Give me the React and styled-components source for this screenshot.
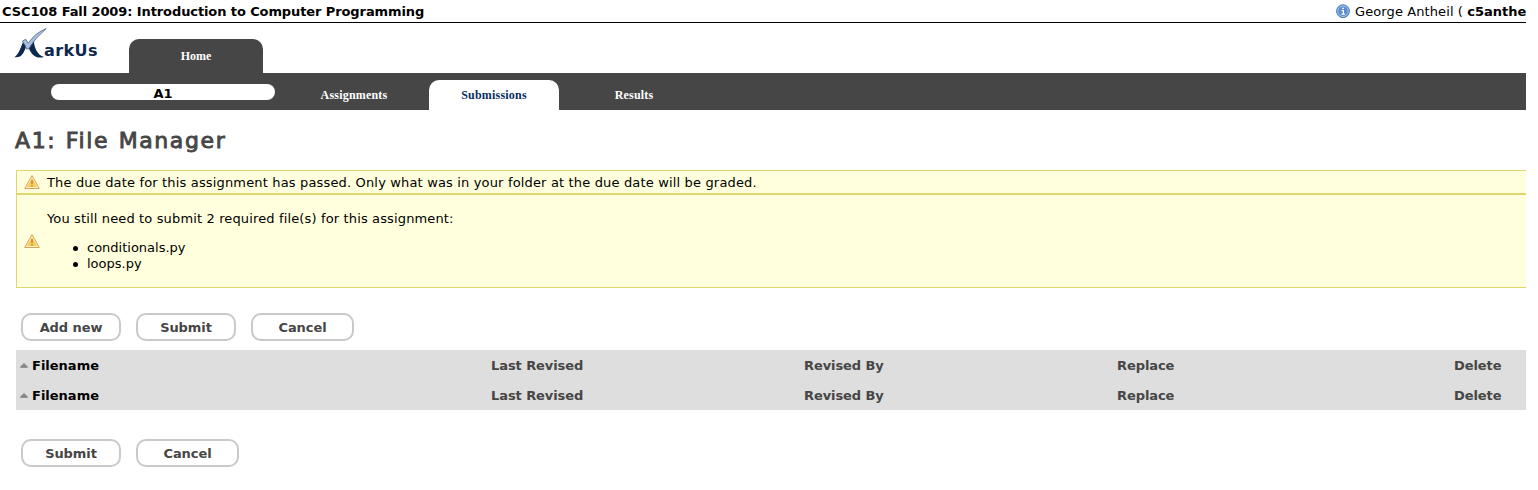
import React from 'react';
import styled, { createGlobalStyle } from 'styled-components';

const Global = createGlobalStyle`
  body { margin: 0; background: #fff; color: #000; font: 13px/16px Verdana, "DejaVu Sans", sans-serif; overflow: hidden; }
  * { box-sizing: border-box; }
`;
const Page = styled.div`width: 1526px; height: 490px; overflow: hidden;`;
const Text = styled.span`
  white-space: pre;
  letter-spacing: ${(p) => p.$ls || 0}px;
  font-weight: ${(p) => (p.$bold ? 700 : 400)};
`;
const TopBar = styled.header`
  height: 23px; padding: 4px 0 0 2px; border-bottom: 1px solid #000;
  display: flex; justify-content: space-between;
`;
const User = styled.div`
  display: flex; width: 190px; overflow: hidden; white-space: pre;
  svg { flex: none; margin-right: 5px; }
`;
const Brand = styled.div`
  height: 50px; display: flex; align-items: flex-end; padding-left: 14px;
`;
const LogoBox = styled.div`
  width: 115px; height: 50px; padding-top: 4px; display: flex; align-items: flex-start;
`;
const LogoText = styled.span`
  font: 700 16px/20px "DejaVu Sans", sans-serif; color: #0d274d; margin: 14px 0 0 -3px;
  letter-spacing: 0.4px;
`;
const HomeTab = styled.a`
  width: 134px; height: 34px; border-radius: 10px 10px 0 0; background: #464646; color: #fff;
  font: 700 12px/34px "Liberation Serif", serif; text-align: center;
`;
const Nav = styled.nav`
  height: 37px; background: #464646; display: flex; align-items: flex-end; padding-left: 51px;
`;
const Pill = styled.div`
  width: 224px; height: 16px; margin: 0 14px 10px 0; border-radius: 8px; background: #fff;
  text-align: center; font-weight: 700; line-height: 19px;
`;
const Tab = styled.a`
  width: 130px; height: 30px; margin-right: 10px; border-radius: 10px 10px 0 0; text-align: center;
  font: 700 12px/30px "Liberation Serif", serif; letter-spacing: 0.2px;
  color: ${(p) => (p.$active ? '#0a2f5f' : '#fff')};
  background: ${(p) => (p.$active ? '#fff' : 'transparent')};
`;
const Title = styled.h1`
  margin: 0; height: 60px; padding: 16px 0 0 15px; color: #464646;
  font: 400 22px/30px "DejaVu Sans", sans-serif; letter-spacing: 1.6px; word-spacing: 1px;
  -webkit-text-stroke: 0.9px #464646;
`;
const Main = styled.main`padding-left: 16px;`;
const Notice = styled.section`
  height: ${(p) => p.$h}px; background: #ffffdd; border: 1px solid #dfd66d; border-right: 0;
  display: flex; align-items: center; padding-left: 7px;
  svg { flex: none; margin-right: 7px; }
`;
const NoticeLine = styled(Text)`padding-top: 1px;`;
const Files = styled.ul`
  margin: 13px 0 0; padding: 0 0 0 40px; list-style: none;
  li { display: flex; align-items: center; margin-left: -14px; }
  li::before { content: ''; width: 5px; height: 5px; border-radius: 50%; background: #000; margin: 1px 9px 0 0; }
`;
const Buttons = styled.div`
  display: flex; gap: 15px; padding: ${(p) => p.$top}px 0 9px 5px;
`;
const Button = styled.button`
  width: ${(p) => p.$w}px; height: 28px; padding: 2px 0 0; border: 2px solid #c9c9c9; border-radius: 10px;
  background: #fff; color: #464646; font: 700 13px/16px "DejaVu Sans", sans-serif; letter-spacing: -0.08px;
`;
const Row = styled.div`
  height: 30px; padding-top: 2px; background: #dedede; color: #464646; font-weight: 700; letter-spacing: -0.08px;
  display: grid; grid-template-columns: 475px 313px 313px 337px 1fr; align-items: center;
`;
const First = styled.div`
  display: flex; align-items: center; color: #000; padding-left: 4px; letter-spacing: 0;
  svg { margin: 0 4px 1px 0; }
`;

const Info = () => (
  <svg width="14" height="16" viewBox="0 0 14 16">
    <circle cx="7" cy="7.2" r="6.4" fill="#5b8fcb" stroke="#4b79b3" />
    <circle cx="7" cy="7.2" r="5.3" fill="none" stroke="#a9c8ea" />
    <path d="M6.2 4.4h1.7M5.5 6.6H7.4V10M5.5 10.2h3.4" stroke="#fff" strokeWidth="1.2" fill="none" />
  </svg>
);
const Warning = () => (
  <svg width="16" height="16" viewBox="0 0 16 16">
    <path d="M8 1.5L15.3 14.5H.7Z" fill="#fff2c8" stroke="#d8a35c" strokeLinejoin="round" />
    <path d="M8 4L13.3 13H2.7Z" fill="#f7cd5c" />
    <path d="M8 6v4M8 11v1.4" stroke="#b88430" strokeWidth="1.4" />
  </svg>
);
const Sort = () => (
  <svg width="8" height="5" viewBox="0 0 8 5">
    <path d="M4 0L7.7 3.5V4.5H.3V3.5Z" fill="#8c8c8c" />
    <path d="M.5 4.2H7.5" stroke="#6d6d6d" strokeWidth=".7" />
  </svg>
);
const Mark = () => (
  <svg width="33" height="32" viewBox="0 0 33 32">
    <path d="M.5 30.2C5 27 6.5 21 9.5 14L12.5 19C9.5 26 8 31 .5 30.2Z" fill="#0d274d" />
    <path d="M19.8 13C20 21 23.5 28 30 30C22.5 32 17.5 28.5 14.5 20.5Z" fill="#0d274d" />
    <path d="M8.3 14.2L11.8 12.3L14.2 16.2Q21 6 32.2 1.6Q21 11 14.6 22H12.4Q11 17 8.3 14.2Z" fill="#a8bfe2" stroke="#4c5f80" strokeWidth=".8" strokeLinejoin="round" />
  </svg>
);

const COLUMNS = ['Last Revised', 'Revised By', 'Replace', 'Delete'];

export default function App() {
  return (
    <Page>
      <Global />
      <TopBar>
        <Text $bold $ls={-0.1}>CSC108 Fall 2009: Introduction to Computer Programming</Text>
        <User><Info /><Text $ls={0.1}>{'George Antheil ( '}</Text><Text $bold>c5anthe</Text></User>
      </TopBar>
      <Brand>
        <LogoBox><Mark /><LogoText>arkUs</LogoText></LogoBox>
        <HomeTab>Home</HomeTab>
      </Brand>
      <Nav>
        <Pill>A1</Pill>
        <Tab>Assignments</Tab><Tab $active>Submissions</Tab><Tab>Results</Tab>
      </Nav>
      <Title>A1: File Manager</Title>
      <Main>
        <Notice $h={24}>
          <Warning />
          <NoticeLine $ls={0.16}>The due date for this assignment has passed. Only what was in your folder at the due date will be graded.</NoticeLine>
        </Notice>
        <Notice $h={94}>
          <Warning />
          <div>
            <Text $ls={0.14}>You still need to submit 2 required file(s) for this assignment:</Text>
            <Files><li>conditionals.py</li><li>loops.py</li></Files>
          </div>
        </Notice>
        <Buttons $top={25}><Button $w={100}>Add new</Button><Button $w={100}>Submit</Button><Button $w={103}>Cancel</Button></Buttons>
        {[0, 1].map((i) => (
          <Row key={i}>
            <First><Sort />Filename</First>
            {COLUMNS.map((c) => <span key={c}>{c}</span>)}
          </Row>
        ))}
        <Buttons $top={29}><Button $w={100}>Submit</Button><Button $w={103}>Cancel</Button></Buttons>
      </Main>
    </Page>
  );
}
